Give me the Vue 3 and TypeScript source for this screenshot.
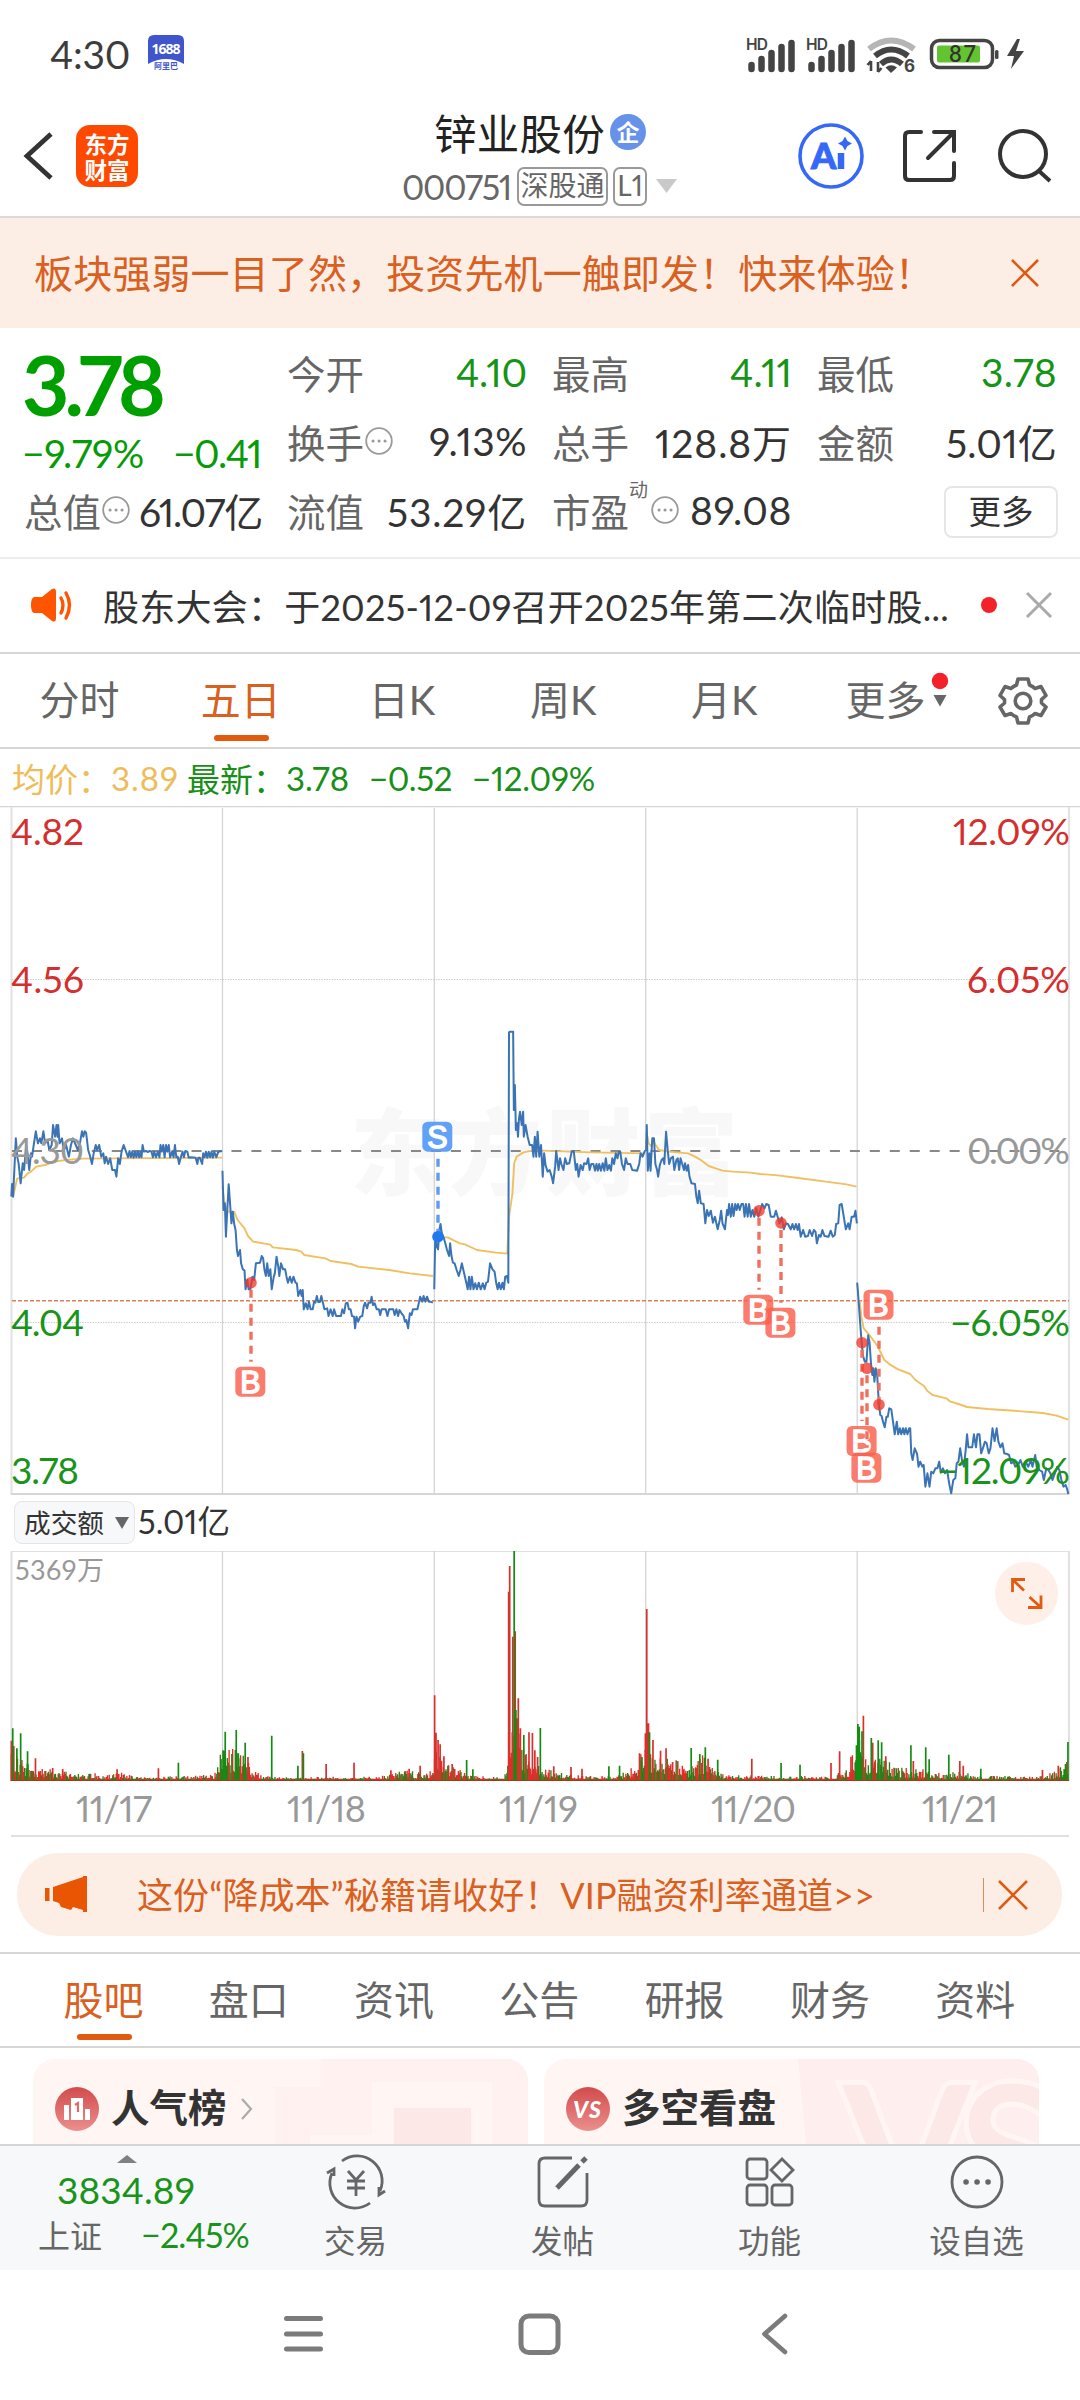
<script setup lang="ts">
interface Cell { label: string; value: string; width: number; down?: boolean; info?: boolean; sup?: string }
interface Marker { x: number; dotY: number; boxY: number; boxX: number; side: 'B' | 'S' }
interface Spike { x: number; top: number; up: boolean }

/* Spreads a text run with letter-spacing so that it fills the given width. */
const vFit = {
  mounted(el: HTMLElement, binding: { value: number }) {
    const count = (el.textContent ?? '').length
    const natural = el.getBoundingClientRect().width
    if (count) el.style.letterSpacing = `${(binding.value - natural) / count}px`
  },
}

const cells: Cell[] = [
  { label: '今开', value: '4.10', width: 71, down: true },
  { label: '最高', value: '4.11', width: 62, down: true },
  { label: '最低', value: '3.78', width: 76, down: true },
  { label: '换手', value: '9.13%', width: 98, info: true },
  { label: '总手', value: '128.8万', width: 137 },
  { label: '金额', value: '5.01亿', width: 111 },
]

const periods = ['分时', '五日', '日K', '周K', '月K', '更多']
const sections = ['股吧', '盘口', '资讯', '公告', '研报', '财务', '资料']

/* Price strokes, one per trading day, on a grid of 3136 units across the screen. */
const price = [
  '33,290 35,252 38,290 46,115 50,170 54,190 60,250 66,190 70,210 76,135 80,160 85,210 90,160 93,170 98,135 104,94 110,130 116,115 120,130 126,94 131,130 138,120 143,150 150,135 154,75 160,110 164,75 167,110 169,75 173,130 180,115 185,150 192,135 200,170 206,135 212,115 220,135 226,150 232,130 238,94 242,110 246,94 250,98 256,150 262,170 267,192 272,160 278,135 282,150 288,135 294,170 300,160 304,190 308,170 314,192 320,175 326,210 334,210 338,230 343,175 348,192 353,155 359,135 366,155 372,172 376,153 380,172 384,155 388,173 392,155 396,172 400,153 404,172 408,155 411,172 414,135 418,155 424,153 430,156 434,153 440,155 444,172 448,155 453,172 458,155 463,172 466,135 470,155 474,135 478,172 482,135 486,155 490,135 494,172 500,155 504,172 508,135 512,172 516,170 520,192 525,172 530,155 534,172 538,153 544,155 548,173 554,172 568,173 573,192 576,173 580,173 587,192 590,160 594,172 598,155 602,173 606,155 610,172 614,155 618,173 622,155 628,172 634,155 645,153',
  '646,212 649,330 653,310 656,410 660,330 664,253 668,310 672,370 676,335 680,372 684,390 688,450 691,468 697,450 700,490 705,508 710,512 713,568 718,540 722,568 727,568 733,530 738,540 743,490 755,488 760,468 764,475 768,510 772,528 776,490 780,528 785,508 789,568 795,530 798,520 803,470 808,500 811,528 816,490 822,508 828,508 832,530 836,548 842,530 847,548 852,530 858,548 862,550 866,588 872,570 876,588 879,570 882,628 888,610 893,628 897,605 902,628 908,628 912,605 916,608 920,588 924,606 929,606 933,588 938,610 942,628 950,625 954,648 960,628 966,648 970,628 976,648 990,648 994,628 999,640 1004,610 1009,608 1013,628 1018,628 1022,648 1028,650 1031,685 1035,650 1040,665 1046,650 1052,648 1056,620 1060,608 1066,625 1070,608 1076,608 1079,590 1083,615 1088,610 1094,628 1100,628 1104,645 1108,628 1120,628 1125,648 1130,628 1142,628 1146,645 1151,628 1156,648 1160,630 1166,640 1172,648 1176,665 1180,660 1185,685 1190,640 1195,645 1199,628 1212,628 1216,610 1220,590 1226,605 1230,588 1235,605 1240,590 1245,605 1250,605 1257,608',
  '1261,568 1264,400 1268,440 1272,448 1276,390 1279,372 1283,400 1288,412 1293,430 1298,450 1304,468 1307,430 1311,468 1315,488 1320,490 1326,510 1332,528 1337,510 1341,490 1346,512 1350,530 1354,548 1358,568 1362,530 1366,568 1370,530 1375,568 1380,550 1385,568 1390,548 1396,568 1402,550 1407,568 1412,548 1417,545 1423,490 1430,508 1436,515 1441,550 1445,568 1449,548 1454,568 1459,548 1463,568 1467,530 1472,528 1476,548 1478,-203 1481,-205 1490,-205 1492,30 1495,-45 1498,90 1502,70 1504,110 1507,55 1510,35 1515,75 1519,35 1521,110 1526,75 1532,110 1538,135 1545,135 1549,170 1553,110 1557,170 1561,95 1566,170 1571,135 1576,230 1580,160 1584,195 1590,215 1596,210 1602,230 1606,250 1612,200 1615,153 1622,210 1626,175 1630,192 1636,210 1641,175 1646,192 1653,190 1660,155 1666,153 1672,210 1676,192 1680,230 1686,195 1692,210 1696,190 1703,192 1708,175 1712,210 1717,192 1723,192 1728,212 1732,192 1736,212 1740,192 1745,212 1750,190 1755,212 1759,175 1764,210 1769,195 1774,212 1778,175 1783,192 1788,160 1793,175 1797,155 1801,155 1806,192 1812,210 1817,175 1822,192 1830,192 1836,210 1850,212 1856,192 1860,160 1866,170 1872,153 1875,153',
  '1876,153 1878,75 1881,212 1886,160 1889,212 1894,115 1899,115 1903,192 1908,210 1911,230 1916,195 1921,180 1926,175 1929,192 1934,95 1939,153 1943,192 1948,175 1954,170 1958,210 1964,180 1968,175 1972,210 1976,175 1981,192 1986,210 1989,190 1994,212 1998,195 2002,230 2008,250 2018,252 2022,290 2026,310 2030,272 2035,310 2043,312 2048,370 2053,330 2058,348 2064,332 2070,368 2076,350 2084,388 2090,360 2094,332 2098,370 2105,388 2111,330 2114,345 2117,312 2122,350 2126,312 2130,348 2135,312 2139,330 2143,312 2148,330 2153,312 2158,312 2162,350 2166,312 2171,350 2175,312 2180,350 2185,330 2190,350 2196,325 2202,350 2208,330 2213,312 2220,325 2225,312 2232,315 2238,350 2248,350 2253,332 2258,350 2263,370 2270,352 2276,388 2282,370 2288,372 2296,388 2301,372 2306,388 2311,372 2316,390 2320,372 2325,410 2332,390 2338,410 2346,408 2351,390 2358,408 2363,390 2368,395 2372,430 2378,405 2383,410 2388,390 2394,408 2406,410 2412,392 2418,410 2424,405 2428,372 2434,370 2438,315 2444,312 2450,350 2456,388 2463,370 2467,388 2473,350 2480,350 2484,332 2488,370',
  '2489,548 2493,600 2497,660 2502,728 2506,768 2511,785 2516,785 2521,706 2525,728 2529,790 2533,825 2536,805 2539,845 2543,805 2547,825 2549,860 2552,912 2556,945 2560,948 2564,965 2569,982 2574,950 2578,950 2582,925 2588,928 2593,965 2598,1003 2604,965 2608,1003 2613,985 2617,1003 2622,985 2626,1003 2630,985 2635,1003 2640,985 2643,985 2646,1060 2650,1080 2656,1045 2663,1062 2667,1100 2672,1085 2678,1100 2682,1095 2687,1160 2693,1120 2699,1160 2704,1115 2710,1120 2716,1105 2722,1105 2727,1085 2732,1118 2738,1105 2744,1120 2750,1110 2756,1150 2762,1180 2768,1140 2774,1135 2778,1090 2783,1085 2788,1045 2794,1085 2799,1100 2804,1050 2808,1003 2812,1042 2823,1042 2828,1003 2834,1042 2838,1003 2844,1003 2849,1060 2854,1045 2860,1025 2865,1030 2871,1060 2876,1045 2882,985 2888,1023 2894,985 2899,1025 2905,1042 2911,1030 2916,1060 2924,1062 2930,1065 2936,1090 2943,1085 2948,1100 2956,1095 2963,1080 2970,1100 2978,1085 2986,1100 2993,1080 2998,1100 3006,1065 3010,1100 3018,1110 3026,1115 3031,1140 3038,1105 3044,1110 3050,1120 3056,1140 3063,1120 3070,1100 3076,1110 3082,1140 3088,1160 3094,1155 3098,1165 3102,1182',
]
const average = [
  '38,290 50,235 70,233 80,220 90,215 105,200 130,195 160,185 190,180 240,176 645,173',
  '646,260 652,310 660,335 680,335 690,360 710,385 720,408 735,425 785,434 792,442 860,450 875,455 883,465 945,475 960,483 1020,492 1040,500 1130,510 1190,520 1257,528',
  '1264,430 1272,412 1300,412 1335,430 1350,433 1385,450 1440,458 1473,461 1478,350 1488,280 1493,190 1500,170 1520,157 1545,152 1573,152 1718,157 1873,160',
  '1876,130 1880,110 1884,130 1890,138 1898,125 1913,150 1943,155 1998,160 2018,170 2038,182 2058,198 2078,205 2098,212 2128,215 2178,218 2208,222 2258,226 2318,234 2398,245 2458,253 2487,260',
  '2496,600 2501,650 2508,685 2528,710 2548,738 2568,780 2583,793 2608,808 2643,822 2658,840 2683,858 2693,873 2708,885 2748,895 2758,904 2783,912 2808,921 2868,927 2968,934 3028,939 3068,947 3102,959',
]

const markers: Marker[] = [
  { x: 251, dotY: 1282.7, boxX: 250.3, boxY: 1381.7, side: 'B' },
  { x: 438, dotY: 1236.7, boxX: 437.3, boxY: 1136.7, side: 'S' },
  { x: 759, dotY: 1210.7, boxX: 758.3, boxY: 1309.7, side: 'B' },
  { x: 781, dotY: 1223, boxX: 780.4, boxY: 1322.7, side: 'B' },
  { x: 879, dotY: 1404.7, boxX: 878.5, boxY: 1304.7, side: 'B' },
  { x: 862, dotY: 1342.7, boxX: 861.6, boxY: 1441, side: 'B' },
  { x: 867, dotY: 1368.3, boxX: 866.4, boxY: 1467.7, side: 'B' },
]
const stem = (m: Marker) =>
  m.boxY > m.dotY ? `M${m.x} ${m.dotY + 7}V${m.boxY - 20}` : `M${m.x} ${m.boxY + 22}V${m.dotY}`

const leftScale = [
  { y: 845, t: '4.82', w: 73, c: '#d42f2f' },
  { y: 992.7, t: '4.56', w: 73, c: '#d42f2f' },
  { y: 1164, t: '4.30', w: 73, c: '#999' },
  { y: 1336, t: '4.04', w: 73, c: '#1a931a' },
  { y: 1484, t: '3.78', w: 68, c: '#1a931a' },
]
const rightScale = [
  { y: 845, t: '12.09%', w: 117, c: '#d42f2f' },
  { y: 992.7, t: '6.05%', w: 103, c: '#d42f2f' },
  { y: 1164, t: '0.00%', w: 103, c: '#999' },
  { y: 1336, t: '−6.05%', w: 120, c: '#1a931a' },
  { y: 1484, t: '−12.09%', w: 133, c: '#1a931a' },
]
const dayLines = [222.5, 434.3, 645.7, 857.2]
const dates = [
  { t: '11/17', x: 76, w: 76 }, { t: '11/18', x: 287, w: 79 }, { t: '11/19', x: 499, w: 79 },
  { t: '11/20', x: 711, w: 85 }, { t: '11/21', x: 922, w: 76 },
]

/* Turnover: a height envelope per stretch of minutes, plus the outstanding bars. */
const base = 843
const envelope: [number, number][] = [
  [33, 110], [50, 80], [75, 55], [110, 42], [200, 26], [240, 18], [265, 32], [300, 14], [345, 26], [400, 12], [620, 18],
  [646, 100], [700, 90], [735, 40], [760, 14], [880, 12], [1100, 14], [1180, 32], [1230, 22], [1255, 30], [1265, 140],
  [1290, 50], [1330, 40], [1370, 16], [1460, 10], [1474, 40], [1480, 130], [1500, 190], [1530, 70], [1570, 60], [1600, 34],
  [1650, 18], [1790, 14], [1840, 40], [1870, 100], [1900, 95], [1950, 70], [2000, 36], [2040, 75], [2070, 45], [2110, 18],
  [2300, 14], [2420, 16], [2470, 45], [2488, 150], [2520, 70], [2570, 65], [2600, 40], [2650, 38], [2700, 38], [2740, 18],
  [2800, 38], [2820, 16], [3000, 14], [3060, 28], [3102, 60],
]
const spikes: Spike[] = (
  [
    [33, 722, 1], [37, 685, 0], [40, 738, 1], [49, 745, 0], [60, 700, 0], [80, 754, 0], [103, 775, 1], [153, 804, 1], [182, 807, 1],
    [340, 808, 1], [460, 805, 1], [518, 788, 0], [649, 752, 0], [654, 695, 0], [686, 690, 0], [692, 760, 0], [712, 728, 0], [720, 771, 1],
    [789, 707, 0], [865, 797, 0], [878, 753, 1], [881, 760, 0], [947, 792, 1], [1028, 788, 1], [1135, 811, 1], [1188, 806, 1], [1220, 797, 1],
    [1262, 586, 1], [1266, 698, 1], [1272, 720, 1], [1278, 733, 1], [1289, 769, 1], [1313, 792, 1], [1355, 780, 0], [1373, 808, 0],
    [1477, 275, 1], [1480, 198, 1], [1489, 410, 1], [1493, 153, 0], [1496, 394, 1], [1498, 630, 0], [1501, 655, 1], [1505, 595, 1],
    [1511, 685, 1], [1521, 705, 0], [1536, 697, 1], [1546, 699, 1], [1553, 751, 1], [1561, 771, 1], [1569, 684, 0], [1608, 799, 1],
    [1658, 801, 1], [1690, 806, 1], [1768, 799, 0], [1799, 797, 0], [1857, 760, 1], [1864, 771, 0], [1874, 700, 1], [1878, 327, 1],
    [1883, 670, 1], [1886, 697, 0], [1896, 720, 1], [1918, 752, 1], [1934, 745, 1], [1953, 786, 1], [2007, 744, 0], [2032, 762, 0],
    [2048, 742, 0], [2056, 776, 1], [2084, 779, 0], [2183, 776, 1], [2268, 789, 0], [2323, 794, 0], [2413, 789, 1], [2438, 754, 1],
    [2471, 770, 1], [2487, 736, 0], [2491, 672, 0], [2495, 680, 0], [2503, 694, 0], [2507, 647, 1], [2530, 714, 0], [2534, 728, 1],
    [2550, 721, 0], [2560, 727, 0], [2572, 769, 1], [2645, 736, 0], [2652, 783, 1], [2688, 742, 0], [2698, 778, 0], [2755, 764, 0],
    [2787, 783, 1], [2797, 797, 1], [2848, 806, 0], [3027, 810, 1], [3073, 797, 1], [3094, 792, 0], [3101, 726, 0],
  ] as [number, number, number][]
).map(([x, top, up]) => ({ x, top, up: up === 1 }))

function levelAt(x: number): number {
  for (let i = 1; i < envelope.length; i++) {
    const [x0, h0] = envelope[i - 1]
    const [x1, h1] = envelope[i]
    if (x <= x1) return h0 + ((h1 - h0) * (x - x0)) / (x1 - x0)
  }
  return 10
}
let seed = 20251121
const random = () => {
  seed = (seed * 1103515245 + 12345) % 2147483648
  return seed / 2147483648
}
let redBars = ''
let greenBars = ''
for (let x = 33; x <= 3102; x += 2.56) {
  const h = Math.max(7, levelAt(x) * (0.25 + 0.8 * Math.pow(random(), 1.5)))
  const falling = random() < (x > 2488 ? 0.5 : 0.36)
  const bar = `M${x.toFixed(1)} ${base}V${(base - h).toFixed(0)}`
  if (falling) greenBars += bar
  else redBars += bar
}
const spikePath = (up: boolean) => spikes.filter((s) => s.up === up).map((s) => `M${s.x} ${base}V${s.top}`).join('')
const redSpikes = spikePath(true)
const greenSpikes = spikePath(false)
</script>

<template>
  <div class="screen">
    <div class="status">
      <span v-fit="80" class="clock">4:30</span>
      <svg class="app1688" width="38" height="38" viewBox="0 0 38 38">
        <path d="M1 7Q1 1 7 1H31Q37 1 37 7V30Q28 25 19 25T1 30Z" fill="#4055cc" />
        <text x="19" y="20" text-anchor="middle" textLength="29" class="t1688">1688</text>
        <text x="19" y="35" text-anchor="middle" class="tsmall">阿里巴</text>
      </svg>
      <svg class="signals" width="290" height="50" viewBox="744 29 290 50">
        <g v-for="o in [0, 60]" :key="o" :transform="`translate(${o} 0)`">
          <text x="746" y="50" class="hd" textLength="22">HD</text>
          <path d="M751.5 69V65M761.5 69V59M771.5 69V53M781.5 69V47M791.5 69V43" stroke="#444" stroke-width="6.5" stroke-linecap="round" />
        </g>
        <g fill="none" stroke-width="6">
          <path d="M869 49Q891 32 914 49" stroke="#b5b5b5" />
          <path d="M875 56Q891 43 908 56" stroke="#444" />
          <path d="M881 64Q891 55 902 64" stroke="#444" />
        </g>
        <path d="M885.5 67.5Q891 63 897 67.5L891 73Z" fill="#444" />
        <path d="M871 71V61M867.5 65L871 61M878 62V72M881.5 68L878 72" stroke="#444" stroke-width="2.6" fill="none" />
        <text x="904" y="72" class="six">6</text>
        <rect x="931.5" y="40.500" width="61" height="27" rx="8" fill="#fff" stroke="#444" stroke-width="3.500" />
        <rect x="937" y="45.500" width="43" height="17" rx="2" fill="#62c52f" />
        <text x="949" y="62" class="pct" textLength="27">87</text>
        <rect x="995" y="50" width="3.500" height="9" rx="1.500" fill="#444" />
        <path d="M1017 39L1007 56H1014L1011 69L1024 51H1016L1020 39Z" fill="#444" />
      </svg>
    </div>

    <header class="head">
      <svg class="chev" width="32" height="52" viewBox="0 0 32 52"><path d="M28 4L4 26L28 48" fill="none" stroke="#333" stroke-width="4.800" /></svg>
      <div class="logo"><span>东方</span><span>财富</span></div>
      <div class="title">
        <div class="name"><span v-fit="171">锌业股份</span><i class="corp">企</i></div>
        <div class="code">
          <span v-fit="109" class="num">000751</span><b class="tag">深股通</b><b class="tag lv">L1</b>
          <svg width="21" height="14" viewBox="0 0 21 14"><path d="M0 0H21L10.500 14Z" fill="#c9c9c9" /></svg>
        </div>
      </div>
      <svg class="tools" width="262" height="72" viewBox="796 120 262 72" fill="none" stroke="#333" stroke-width="4">
        <circle cx="831" cy="156" r="31" stroke="#3568f6" stroke-width="3.600" />
        <text x="811" y="169" class="ai">A</text>
        <path d="M841 153V169" stroke="#3568f6" stroke-width="6.500" />
        <path d="M845 136.500L847.500 141L852 143.500L847.500 146L845 150.500L842.500 146L838 143.500L842.500 141Z" fill="#3568f6" stroke="none" />
        <path d="M921 132H909Q905 132 905 136V176Q905 180 909 180H950Q954 180 954 176V163M934 132H954V151M953 133L928 158" stroke-linecap="round" />
        <circle cx="1023" cy="154" r="23" /><path d="M1039 171L1050 181" />
      </svg>
    </header>

    <div class="banner">
      <span v-fit="900">板块强弱一目了然，投资先机一触即发！快来体验！</span>
      <svg width="30" height="30" viewBox="0 0 30 30"><path d="M2 2L28 28M28 2L2 28" stroke="#de5a10" stroke-width="2.600" /></svg>
    </div>

    <section class="quote">
      <div class="last">
        <div class="now"><span v-fit="139">3.78</span></div>
        <div class="chg"><span v-fit="122">−9.79%</span><span v-fit="88">−0.41</span></div>
        <div class="cell cap">
          <span>总值</span><svg class="dots" viewBox="0 0 28 28"><circle cx="14" cy="14" r="12.800" /><path d="M8 14h.1M14 14h.1M20 14h.1" /></svg>
          <em v-fit="123">61.07亿</em>
        </div>
      </div>
      <div class="grid">
        <div v-for="c in cells" :key="c.label" class="cell">
          <span>{{ c.label }}</span>
          <svg v-if="c.info" class="dots" viewBox="0 0 28 28"><circle cx="14" cy="14" r="12.800" /><path d="M8 14h.1M14 14h.1M20 14h.1" /></svg>
          <em v-fit="c.width" :class="{ down: c.down }">{{ c.value }}</em>
        </div>
        <div class="cell"><span>流值</span><em v-fit="140">53.29亿</em></div>
        <div class="cell">
          <span>市盈<sup>动</sup></span>
          <svg class="dots pe" viewBox="0 0 28 28"><circle cx="14" cy="14" r="12.800" /><path d="M8 14h.1M14 14h.1M20 14h.1" /></svg>
          <em v-fit="102">89.08</em>
        </div>
        <div class="cell end"><button class="more">更多</button></div>
      </div>
    </section>

    <div class="news">
      <svg width="44" height="36" viewBox="0 0 44 36">
        <path d="M3 10Q0 11 0 18T3 26H11L21 34Q25 36 25 31V5Q25 0 21 2L11 10Z" fill="#ff5500" />
        <path d="M30 11Q34 18 30 26M35 6Q42 18 35 31" fill="none" stroke="#ff5500" stroke-width="3.400" stroke-linecap="round" />
      </svg>
      <span v-fit="846" class="headline">股东大会：于2025-12-09召开2025年第二次临时股...</span>
      <i class="dot" />
      <svg class="close" width="28" height="28" viewBox="0 0 28 28"><path d="M2 2L26 26M26 2L2 26" stroke="#aaa" stroke-width="3" /></svg>
    </div>

    <nav class="periods">
      <div v-for="(p, i) in periods" :key="p" class="tab" :class="{ on: i === 1 }">
        {{ p }}
        <svg v-if="i === 5" class="flag" width="18" height="36" viewBox="0 0 18 36"><circle cx="9" cy="9" r="8.200" fill="#f3222a" /><path d="M2.500 23H15.500L9 34.500Z" fill="#666" /></svg>
      </div>
      <svg class="gear" width="50" height="50" viewBox="0 0 50 50" fill="none" stroke="#666" stroke-width="3.600" stroke-linejoin="round">
        <path d="M20 3H30L31.500 9Q35 10.500 37 12.500L43 10.500L48 19.500L43.500 23.500V27L48 31L43 39.500L37 37.500Q35 39.500 31.500 41L30 47H20L18.500 41Q15 39.500 13 37.500L7 39.500L2 31L6.500 27V23.500L2 19.500L7 10.500L13 12.500Q15 10.500 18.500 9Z" />
        <circle cx="25" cy="25" r="7.800" />
      </svg>
    </nav>

    <div class="legend">
      <span class="avg">均价：</span><span v-fit="68" class="avg n1">3.89</span>
      <span class="new">最新：</span><span v-fit="63" class="new n2">3.78</span>
      <span v-fit="83" class="new n3">−0.52</span><span v-fit="123" class="new n4">−12.09%</span>
    </div>

    <svg class="chart" width="1080" height="690" viewBox="0 806 1080 690">
      <text x="350" y="1188" class="mark" textLength="388">东方财富</text>
      <g fill="none" stroke="#d6d6d6">
        <path d="M0 806.500H1080" stroke-width="1.400" />
        <path d="M11.500 807V1495M1069 807V1495" stroke="#e2e2e2" stroke-width="2" />
        <path v-for="x in dayLines" :key="x" :d="`M${x} 808V1494`" stroke="#d2d2d2" stroke-width="1.200" />
        <path d="M11 1494H1069" stroke-width="1.800" />
        <path d="M12 979.500H1069M12 1322.500H1069" stroke="#c6c6c6" stroke-dasharray="1.300 1.300" />
      </g>
      <path d="M12 1151H1069" stroke="#888" stroke-width="2" stroke-dasharray="10 9.950" />
      <path d="M12 1300.700H1069" stroke="#dd8058" stroke-width="1.400" stroke-dasharray="4 2" />
      <g transform="translate(0 1100) scale(.34439 .33333)" fill="none" stroke-linejoin="round">
        <polyline v-for="(p, i) in average" :key="'a' + i" :points="p" class="line avgline" />
        <polyline v-for="(p, i) in price" :key="'p' + i" :points="p" class="line priceline" />
      </g>
      <g v-for="(m, i) in markers" :key="i" :class="m.side">
        <path :d="stem(m)" class="stem" />
        <circle :cx="m.x" :cy="m.dotY" r="5.800" class="pin" />
        <rect :x="m.boxX - 15" :y="m.boxY - 15" width="30" height="30" rx="5.500" class="box" />
        <text :x="m.boxX" :y="m.boxY + 11" text-anchor="middle" class="letter">{{ m.side }}</text>
      </g>
      <text v-for="l in leftScale" :key="l.t" x="11" :y="l.y" :textLength="l.w" :fill="l.c" class="scale">{{ l.t }}</text>
      <text v-for="l in rightScale" :key="l.t" :x="1070 - l.w" :y="l.y" :textLength="l.w" :fill="l.c" class="scale">{{ l.t }}</text>
    </svg>

    <div class="volhead">
      <div class="pill"><span>成交额</span><svg width="14" height="12" viewBox="0 0 14 12"><path d="M0 0H14L7 12Z" fill="#666" /></svg></div>
      <span v-fit="92" class="amount">5.01亿</span>
    </div>

    <svg class="volume" width="1080" height="287" viewBox="0 1551 1080 287">
      <g fill="none" stroke="#e0e0e0">
        <path d="M11 1551.500H1069" stroke-width="1.200" />
        <path d="M11.500 1551V1781M1069 1551V1781" stroke-width="2" />
        <path v-for="x in dayLines" :key="x" :d="`M${x} 1551V1781`" stroke="#d2d2d2" stroke-width="1.200" />
        <path d="M11 1836H1069" stroke-width="1.800" />
      </g>
      <g transform="translate(0 1500) scale(.34439 .33333)" fill="none">
        <path :d="redBars" stroke="#e62a26" class="bar" />
        <path :d="greenBars" stroke="#2f7d14" class="bar" />
        <path :d="redSpikes" stroke="#d9302d" class="bar sp" />
        <path :d="greenSpikes" stroke="#128c12" class="bar sp" />
      </g>
      <path d="M11 1780.500H1069" stroke="#a03a1c" stroke-width="1.200" />
      <text x="15" y="1580" fill="#999" class="max" textLength="89">5369万</text>
      <text v-for="d in dates" :key="d.t" :x="d.x" y="1821.500" :textLength="d.w" fill="#999" class="date">{{ d.t }}</text>
      <circle cx="1026.600" cy="1593.300" r="31.600" fill="#fef0e8" />
      <path d="M1012.500 1592V1579.500H1025M1012.500 1579.500L1024 1590.500M1041 1595.500V1607.500H1028M1041 1607.500L1029.500 1597" fill="none" stroke="#df5c12" stroke-width="2.800" />
    </svg>

    <div class="promo">
      <svg width="43" height="37" viewBox="0 0 43 37"><path d="M0 12H4.500V25H0ZM8 11L38 1V0H42V36H38V34L28 31L26 34L16 31L14 27L8 25Z" fill="#ea5504" /></svg>
      <span v-fit="738" class="ptext">这份“降成本”秘籍请收好！VIP融资利率通道&gt;&gt;</span>
      <i class="sep" />
      <svg width="30" height="30" viewBox="0 0 30 30"><path d="M1 1L29 29M29 1L1 29" stroke="#de5a10" stroke-width="2.600" /></svg>
    </div>

    <nav class="sections">
      <div v-for="(s, i) in sections" :key="s" class="tab" :class="{ on: i === 0 }">{{ s }}</div>
    </nav>

    <div class="cards">
      <div class="card">
        <svg class="deco" width="495" height="86" viewBox="0 0 495 86">
          <path d="M288 0H495V86H242V28H288Z" fill="#fef1ef" /><path d="M339 23H459V86H277V76H339Z" fill="#fff6f4" /><path d="M361 49H438V86H361Z" fill="#fbe8e7" />
        </svg>
        <svg class="badge" width="44" height="44" viewBox="0 0 44 44">
          <circle cx="22" cy="22" r="22" fill="url(#r)" /><defs><linearGradient id="r" x2="0" y2="1"><stop stop-color="#d24b4b" /><stop offset="1" stop-color="#eb8f8d" /></linearGradient></defs>
          <path d="M9 18H14V33H9ZM16 11H28V33H16ZM30 22H35V33H30Z" fill="#fff" /><path d="M20 18L23 16V25" fill="none" stroke="#dc6b6a" stroke-width="2.200" />
        </svg>
        <span class="ctitle">人气榜</span>
        <svg class="go" width="12" height="22" viewBox="0 0 12 22"><path d="M1 1L10 11L1 21" fill="none" stroke="#aaa" stroke-width="2.200" /></svg>
      </div>
      <div class="card">
        <svg class="deco" width="495" height="86" viewBox="0 0 495 86">
          <path d="M254 0H495V86H262Z" fill="#feefee" /><text x="296" y="162" class="bigvs" textLength="222">VS</text>
        </svg>
        <svg class="badge" width="44" height="44" viewBox="0 0 44 44"><circle cx="22" cy="22" r="22" fill="url(#r)" /><text x="21" y="31" text-anchor="middle" class="vs" textLength="28">VS</text></svg>
        <span class="ctitle">多空看盘</span>
      </div>
    </div>

    <div class="bar5">
      <div class="index">
        <svg width="20" height="8" viewBox="0 0 20 8"><path d="M10 0L20 8H0Z" fill="#808080" /></svg>
        <div class="pts"><span v-fit="138">3834.89</span></div>
        <div class="sz"><span>上证</span><em v-fit="108">−2.45%</em></div>
      </div>
      <div class="act">
        <svg width="60" height="56" viewBox="-30 -28 60 56">
          <path d="M-14 -21A25 25 0 0 1 24 9M14 21A25 25 0 0 1 -24 -9M-29 -9L-22 -13V-6M29 9L23 13V5" /><path d="M-8 -11L0 -2L8 -11M0 -2V14M-9 -1H9M-9 6H9" />
        </svg><span>交易</span>
      </div>
      <div class="act">
        <svg width="60" height="56" viewBox="-30 -28 60 56"><path d="M9 -24H-18Q-24 -24 -24 -18V18Q-24 24 -18 24H18Q24 24 24 18V-9" /><path d="M-6 6L16 -17" stroke-width="5" /><path d="M19 -20L23 -24" stroke-width="5" /></svg><span>发帖</span>
      </div>
      <div class="act">
        <svg width="60" height="56" viewBox="-30 -28 60 56"><rect x="-23" y="-23" width="20" height="20" rx="3" /><rect x="-23" y="3" width="20" height="20" rx="3" /><rect x="2" y="3" width="20" height="20" rx="3" /><path d="M12 -23L23 -12L12 -1L1 -12Z" /></svg><span>功能</span>
      </div>
      <div class="act">
        <svg width="60" height="56" viewBox="-30 -28 60 56"><circle r="25" /><path d="M-11 0h.1M0 0h.1M11 0h.1" stroke-width="5.500" stroke-linecap="round" /></svg><span>设自选</span>
      </div>
    </div>

    <div class="sysnav">
      <svg width="1080" height="60" viewBox="0 2305 1080 60" fill="none" stroke="#7b7b7b" stroke-width="5">
        <path d="M286.500 2319.500H320.500M286.500 2335H320.500M286.500 2350H320.500" stroke-linecap="round" />
        <rect x="521" y="2317" width="37" height="36.500" rx="8" /><path d="M785 2317L764.500 2335L785 2353" stroke-width="4.600" stroke-linecap="round" stroke-linejoin="round" />
      </svg>
    </div>
  </div>
</template>

<style>
body { background: #fff; }
</style>

<style scoped>
.screen { width: 1080px; height: 2400px; overflow: hidden; background: #fff; display: flex; flex-direction: column; font-family: Lato, "Noto Sans CJK SC", sans-serif; font-variant-numeric: proportional-nums; color: #333; white-space: nowrap; }
.screen > * { box-sizing: border-box; flex: none; }
svg { flex: none; display: block; }
svg text { font-family: Lato, "Noto Sans CJK SC", sans-serif; }
em, i, b { font-style: normal; font-weight: 400; }
[class] > span { flex: none; }

.status { height: 92px; display: flex; align-items: center; padding: 16px 0 0 50px; }
.clock { font-size: 39px; line-height: 46px; color: #3c3c3c; }
.app1688 { margin-left: 17px; margin-top: -3px; }
.t1688 { font: 700 14px "Open Sans", sans-serif; fill: #fff; }
.tsmall { font-size: 8px; font-weight: 700; fill: #4055cc; }
.signals { margin-left: 559px; }
svg .hd { font: 600 15.500px Inter, sans-serif; fill: #444; }
svg .six { font: 700 17px Inter, sans-serif; fill: #444; }
svg .pct { font: 600 22px Lato, sans-serif; fill: #333; }

.head { height: 126px; border-bottom: 2px solid #d9d9d9; display: flex; position: relative; padding-left: 23px; }
.chev { margin-top: 38px; }
.logo { width: 62px; height: 62px; margin: 33px 0 0 21px; border-radius: 14px; background: #ff4800; color: #fff; display: flex; flex-direction: column; align-items: center; justify-content: center; font: 700 22.500px/26px "Noto Sans CJK SC", sans-serif; }
.title { margin-left: 264px; width: 280px; }
.name { display: flex; align-items: center; height: 50px; margin: 15px 0 0 32px; font-size: 42.500px; color: #222; }
.name > span { margin-top: -2px; }
.corp { width: 36px; height: 36px; border-radius: 50%; background: #6692ea; color: #fff; font: 700 23px/35px "Noto Sans CJK SC", sans-serif; text-align: center; margin-left: 5px; }
.code { display: flex; align-items: center; height: 40px; margin-top: 9px; color: #666; }
.num { font-size: 34px; }
.tag { box-sizing: border-box; height: 39px; width: 91px; margin-left: 6px; border: 2px solid #999; border-radius: 7px; font-size: 28px; line-height: 33px; text-align: center; }
.lv { width: 34px; margin-left: 5px; }
.code svg { margin-left: 9px; }
.tools { margin: 28px 0 0 114px; }
svg .ai { font: 900 36px Lato, sans-serif; fill: #3568f6; stroke: #3568f6; stroke-width: 1; }

.banner { height: 110px; background: #fceee5; color: #d9601f; display: flex; align-items: center; justify-content: space-between; padding: 0 40px 0 34px; font-size: 39px; }
.banner span { margin-top: -4px; }

.quote { height: 229px; display: flex; padding: 11px 24px 0; gap: 26px; }
.last { width: 239px; color: #079b07; }
.now { height: 90px; font-size: 82px; font-weight: 700; line-height: 90px; color: #009f00; margin-left: -2px; }
.chg { height: 48px; display: flex; justify-content: space-between; font-size: 39px; line-height: 48px; margin-left: -2px; }
.grid { flex: 1; display: grid; grid-template-columns: repeat(3, 239px); column-gap: 26px; grid-auto-rows: 69px; }
.cell { box-sizing: border-box; height: 69px; display: flex; align-items: center; padding-bottom: 4px; font-size: 38.500px; color: #666; }
.cell span { font-size: 38.500px; position: relative; }
.cell em { margin: 0 -1px 0 auto; color: #333; font-size: 39px; }
.cell em.down { color: #169416; }
.dots { width: 28px; height: 28px; margin-left: 1px; fill: none; stroke: #999; stroke-width: 1.800; }
.dots path { stroke-width: 3; stroke-linecap: round; }
sup { position: absolute; left: 77px; top: -4px; font-size: 19px; line-height: 24px; }
.pe { margin-left: 22px; }
.cell.end { justify-content: flex-end; padding: 0; }
.more { width: 114px; height: 52px; border: 2px solid #e6e6e6; border-radius: 8px; background: #fff; font: 32.500px "Noto Sans CJK SC", sans-serif; line-height: 42px; padding: 0 0 3px; color: #333; margin-right: -2px; }

.news { height: 97px; border-top: 2px solid #ececec; border-bottom: 2px solid #d6d6d6; display: flex; align-items: center; padding: 0 0 2px 31px; }
.headline { margin-left: 28px; font-size: 36px; }
.dot { width: 16px; height: 16px; border-radius: 50%; background: #f3222a; margin-left: 32px; }
.close { margin-left: 28px; }

.periods { height: 95px; border-bottom: 2px solid #d6d6d6; display: flex; align-items: center; }
.tab { position: relative; text-align: center; font-size: 40px; color: #666; height: 93px; line-height: 93px; }
.periods .tab { width: 161.200px; left: -1px; }
.tab.on { color: #d9601f; }
.tab.on::after { content: ""; position: absolute; left: 50%; bottom: 6px; width: 55px; height: 6px; margin-left: -26.500px; border-radius: 3px; background: #e05a10; }
.flag { position: absolute; left: 126px; top: 18px; }
.gear { margin: 1px 0 0 31px; }

.legend { height: 57px; display: flex; align-items: center; font-size: 33px; padding: 0 0 0 12px; }
.avg { color: #efbc5a; }
.new { color: #188f18; }
.n1 { margin-right: 8px; } .n2 { margin-right: 20px; } .n3 { margin-right: 20px; }

.scale { font-size: 37px; }
svg .mark { font: 900 94px "Noto Sans CJK SC", sans-serif; fill: #f8f8f8; }
.line { vector-effect: non-scaling-stroke; }
.avgline { stroke: #f0c060; stroke-width: 1.900; }
.priceline { stroke: #3b74b4; stroke-width: 2; }
.stem { stroke: #f07060; stroke-width: 3.400; stroke-dasharray: 8 6; }
.S .stem { stroke: #5f9cf0; }
.pin { fill: #f0392b; fill-opacity: .78; }
.S .pin { fill: #1e78f0; fill-opacity: 1; }
.box { fill: #fa5f4d; fill-opacity: .82; }
.S .box { fill: #5a9cf8; fill-opacity: .95; }
svg .letter { font: 400 30.500px "Liberation Sans", sans-serif; fill: #fff; stroke: #fff; stroke-width: 1.500; }

.volhead { height: 55px; display: flex; padding: 5px 0 0 14px; }
.pill { box-sizing: border-box; width: 121px; height: 43px; border: 1.500px solid #e3e5e8; border-radius: 8px; background: #f7f8fa; display: flex; align-items: center; gap: 11px; padding-left: 9px; font-size: 26.700px; }
.pill span { margin-top: -3px; }
.amount { margin-left: 3px; font-size: 32.500px; line-height: 42px; }
.bar { vector-effect: non-scaling-stroke; stroke-width: 1.350; }
.sp { stroke-width: 1.700; }
.max { font-size: 27px; }
.date { font-size: 36px; }

.promo { height: 83px; margin: 15px 18px 16px 17px; border-radius: 41px; background: #fceee5; display: flex; align-items: center; padding-left: 28px; color: #d9601f; }
.ptext { margin: -4px 0 0 49px; font-size: 36px; }
.sep { width: 1.500px; height: 34px; background: #e08a58; margin: 0 14px 0 auto; }
.promo svg:last-child { margin-right: 34px; }

.sections { height: 96px; border-top: 2px solid #d6d6d6; border-bottom: 2px solid #d6d6d6; display: flex; padding-left: 30.800px; }
.sections .tab { width: 145.300px; font-size: 40px; line-height: 92px; height: 92px; }

.cards { height: 96px; padding: 11px 0 0 33px; display: flex; gap: 16px; overflow: hidden; }
.card { position: relative; width: 495px; height: 120px; border-radius: 22px; background: #fff6f4; overflow: hidden; display: flex; align-items: flex-start; box-sizing: border-box; padding: 28px 0 0 22px; }
.deco { position: absolute; left: 0; top: 0; }
svg .bigvs { font: 900 190px Lato, sans-serif; fill: #fce8e7; stroke: #fff6f4; stroke-width: 5; }
.badge, .ctitle, .go { position: relative; }
svg .vs { font: italic 900 23px Lato, sans-serif; fill: #fff; }
.ctitle { margin: -1px 0 0 12px; font-size: 38.500px; line-height: 42px; font-weight: 700; color: #333; }
.go { margin: 11px 0 0 14px; }

.bar5 { height: 126px; border-top: 2px solid #d3d6d9; background: #f6f8fa; display: flex; }
.index { width: 252px; color: #1a931a; }
.index svg { margin: 9px 0 0 117px; }
.pts { height: 44px; line-height: 44px; padding-left: 57px; font-size: 37px; margin-top: 5px; }
.sz { display: flex; align-items: center; gap: 39px; padding-left: 38px; height: 44px; font-size: 34px; }
.sz span { font-size: 32px; color: #666; }
.act { width: 207px; display: flex; flex-direction: column; align-items: center; padding-top: 8px; }
.act svg { fill: none; stroke: #666; stroke-width: 2.800; }
.act span { font-size: 31.500px; line-height: 44px; margin-top: 9px; color: #666; }
.sysnav { height: 130px; padding-top: 34px; }
</style>
